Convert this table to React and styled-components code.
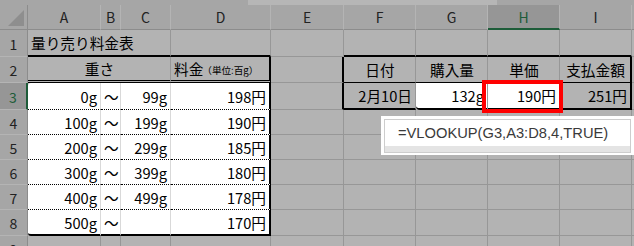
import React from "react";
import styled, { createGlobalStyle } from "styled-components";

const GlobalStyle = createGlobalStyle`
  * { box-sizing: border-box; }
  html, body {
    margin: 0;
    padding: 0;
    background: #b3b3b3;
    overflow: hidden;
  }
  body {
    font-family: "Noto Sans CJK JP", "Noto Sans", sans-serif;
  }
`;

const GRID = "#979797";
const LIGHT = "#d9d9d9";
const GREEN = "#1d5c39";

const edges = {
  grid: `1px solid ${GRID}`,
  light: `1px solid ${LIGHT}`,
  thin: "1px solid #000",
  thick: "2px solid #000",
  double: "3px double #000",
  dotted: "1px dotted #000",
};

const justify = { left: "flex-start", center: "center", right: "flex-end" };

const corners = {
  top: "3px 0 0 0",
  bottom: "0 0 0 3px",
  bottomLeft: "0 0 0 4px",
};

const Sheet = styled.div`
  position: relative;
  width: 634px;
  height: 246px;
  overflow: hidden;
  background: #b3b3b3;
`;

// strip of the ribbon/formula area just above the column headers
const TopStrip = styled.div`
  height: 5px;
  background: linear-gradient(
    to right,
    #a6a6a6 248px,
    #b6b6b6 248px,
    #b6b6b6 497px,
    #a6a6a6 497px
  );
`;

const Grid = styled.div`
  display: grid;
  grid-template-columns: 28px 73px 20px 50px 100px 73px 72px 72px 72px 72px 30px;
  grid-template-rows: 25px 27px 26px 27px 25px 25px 25px 25px 26px 25px;
  background: #b3b3b3;
`;

const Corner = styled.div`
  display: flex;
  align-items: flex-end;
  justify-content: flex-end;
  padding: 0 3px 3px 0;
  background: #a6a6a6;
  border-right: 1px solid #8c8c8c;
  border-bottom: 1px solid #8c8c8c;
`;

const ColHead = styled.div`
  display: flex;
  align-items: center;
  justify-content: center;
  background: ${(p) => (p.$selected ? "#969696" : "#a6a6a6")};
  border-right: 1px solid #b4b4b4;
  border-bottom: ${(p) => (p.$selected ? `2px solid ${GREEN}` : "1px solid #8c8c8c")};
  color: ${(p) => (p.$selected ? GREEN : "#222")};
  font-size: 14px;
`;

const RowHead = styled.div`
  display: flex;
  align-items: center;
  justify-content: center;
  padding-top: 1px;
  background: ${(p) => (p.$selected ? "#969696" : "#a6a6a6")};
  border-right: ${(p) => (p.$selected ? `2px solid ${GREEN}` : "1px solid #8c8c8c")};
  border-bottom: 1px solid #b4b4b4;
  color: ${(p) => (p.$selected ? GREEN : "#222")};
  font-size: 14px;
`;

const Cell = styled.div`
  grid-column: span ${(p) => p.$span || 1};
  position: ${(p) => (p.$marked ? "relative" : "static")};
  z-index: ${(p) => (p.$marked ? 2 : "auto")};
  min-width: 0;
  display: flex;
  align-items: center;
  justify-content: ${(p) => justify[p.$align || "left"]};
  padding: 0 ${(p) => (p.$align === "right" ? "3px" : "2px")} 0
    ${(p) => (p.$align === "right" ? "0" : "3px")};
  white-space: nowrap;
  background: ${(p) => (p.$white ? "#fff" : "#b3b3b3")};
  border-right: ${(p) => edges[p.$right || (p.$white ? "light" : "grid")]};
  border-bottom: ${(p) => edges[p.$bottom || "grid"]};
  border-radius: ${(p) => corners[p.$round] || 0};
  color: #000;
  font-size: 14.67px;
`;

const Unit = styled.span`
  font-size: 9.6px;
  margin-top: 2px;
  margin-left: -1px;
`;

// red annotation frame around the looked-up value
const Highlight = styled.span`
  position: absolute;
  top: -3px;
  left: -6px;
  right: -4px;
  bottom: -5px;
  border: 4px solid #ff0000;
  pointer-events: none;
`;

const FormulaPopup = styled.div`
  position: absolute;
  z-index: 3;
  left: 381px;
  top: 116px;
  width: 253px;
  padding: 3px 3px 2px;
  background: #fff;
`;

const FormulaFrame = styled.div`
  border: 1px solid #cdcdcd;
  background: #e4e4e4;
  padding-bottom: 6px;
`;

const FormulaText = styled.div`
  height: 26px;
  display: flex;
  align-items: center;
  padding-left: 13px;
  background: #fff;
  color: #3a3a3a;
  font-family: "Liberation Sans", Arial, sans-serif;
  font-size: 14.7px;
  white-space: nowrap;
`;

const columns = ["A", "B", "C", "D", "E", "F", "G", "H", "I", "J"];

const priceTable = [
  ["0g", "99g", "198円"],
  ["100g", "199g", "190円"],
  ["200g", "299g", "185円"],
  ["300g", "399g", "180円"],
  ["400g", "499g", "178円"],
  ["500g", "", "170円"],
];

const CornerMark = () => (
  <svg width="16" height="16" viewBox="0 0 16 16">
    <polygon points="16,0 16,16 0,16" fill="#8e8e8e" />
  </svg>
);

const App = () => {
  return (
    <>
      <GlobalStyle />
      <Sheet>
        <TopStrip />
        <Grid>
          <Corner>
            <CornerMark />
          </Corner>
          {columns.map((c) => (
            <ColHead key={c} $selected={c === "H"}>
              {c === "J" ? "" : c}
            </ColHead>
          ))}

          <RowHead>1</RowHead>
          <Cell $span={3} $bottom="thick">
            量り売り料金表
          </Cell>
          <Cell $bottom="thick" />
          <Cell />
          <Cell $bottom="thick" />
          <Cell $bottom="thick" />
          <Cell $bottom="thick" />
          <Cell $bottom="thick" />
          <Cell />

          <RowHead>2</RowHead>
          <Cell $span={3} $align="center" $bottom="double">
            重さ
          </Cell>
          <Cell $bottom="double" $right="thick">
            料金<Unit>（単位:百g）</Unit>
          </Cell>
          <Cell $right="thick" />
          <Cell $align="center" $bottom="thin">
            日付
          </Cell>
          <Cell $align="center" $bottom="thin">
            購入量
          </Cell>
          <Cell $align="center" $bottom="thin">
            単価
          </Cell>
          <Cell $align="center" $bottom="thin" $right="thick">
            支払金額
          </Cell>
          <Cell />

          {priceTable.map(([from, to, price], i) => {
            const row = i + 3;
            const last = row === 8;
            const line = last ? "thick" : "dotted";
            return (
              <React.Fragment key={row}>
                <RowHead $selected={row === 3}>{row}</RowHead>
                <Cell
                  $white
                  $align="right"
                  $bottom={line}
                  $round={row === 3 ? "top" : last ? "bottom" : null}
                >
                  {from}
                </Cell>
                <Cell $white $bottom={line}>
                  ～
                </Cell>
                <Cell $white $align="right" $bottom={line}>
                  {to}
                </Cell>
                <Cell $white $align="right" $bottom={line} $right="thick">
                  {price}
                </Cell>
                {row === 3 ? (
                  <>
                    <Cell $right="thick" />
                    <Cell $align="right" $bottom="thick">
                      2月10日
                    </Cell>
                    <Cell $white $align="right" $bottom="thick" $right="grid" $round="bottomLeft">
                      132g
                    </Cell>
                    <Cell $white $marked $align="right" $bottom="thick" $right="grid">
                      190円
                      <Highlight />
                    </Cell>
                    <Cell $align="right" $bottom="thick" $right="thick">
                      251円
                    </Cell>
                  </>
                ) : (
                  <>
                    <Cell />
                    <Cell />
                    <Cell />
                    <Cell />
                    <Cell />
                  </>
                )}
                <Cell />
              </React.Fragment>
            );
          })}

          <RowHead>9</RowHead>
          {columns.map((c) => (
            <Cell key={c} />
          ))}
        </Grid>

        <FormulaPopup>
          <FormulaFrame>
            <FormulaText>=VLOOKUP(G3,A3:D8,4,TRUE)</FormulaText>
          </FormulaFrame>
        </FormulaPopup>
      </Sheet>
    </>
  );
};

export default App;
